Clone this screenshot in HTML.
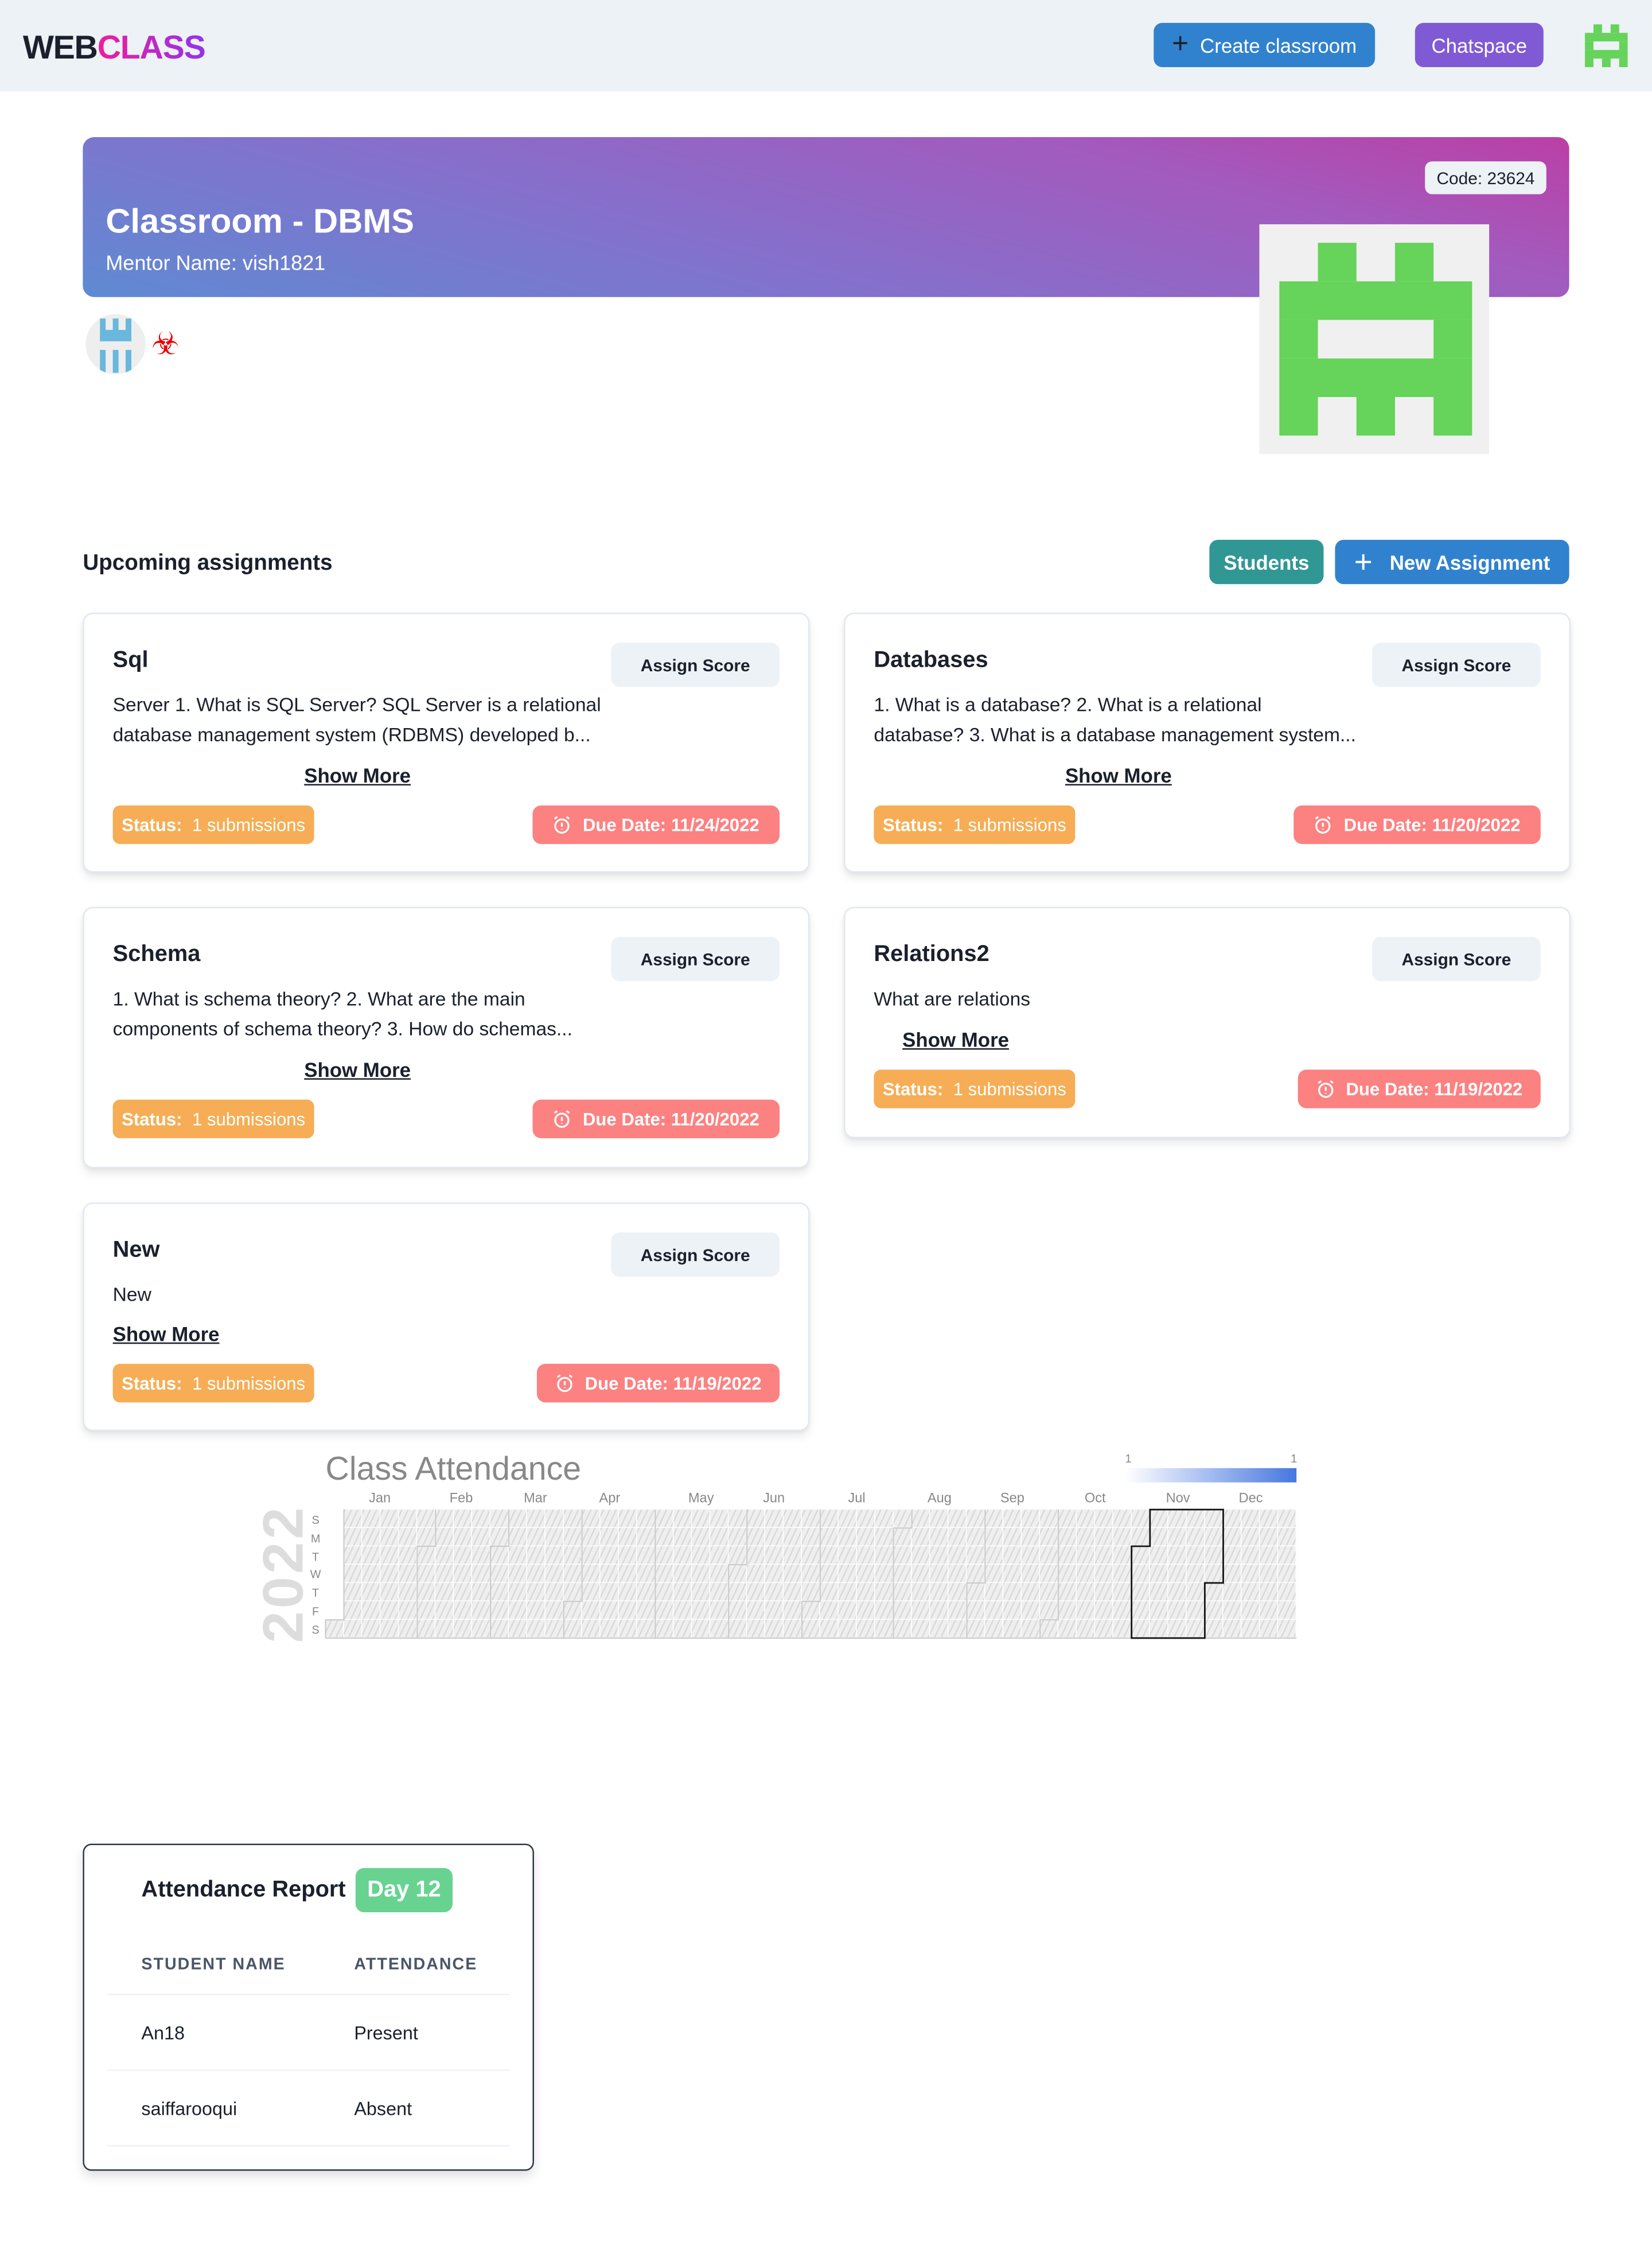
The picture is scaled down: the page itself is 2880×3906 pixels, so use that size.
<!DOCTYPE html>
<html><head><meta charset="utf-8">
<style>
html,body{margin:0;padding:0;background:#fff;}
body{width:2880px;height:3904px;overflow:hidden;position:relative;font-family:"Liberation Sans",sans-serif;color:#1a202c;}
#w{position:absolute;left:0;top:0;width:1157px;height:1569px;transform:scale(2.4892);transform-origin:0 0;}
.a{position:absolute;white-space:nowrap;}
.btn{position:absolute;border-radius:6px;color:#fff;font-weight:bold;font-size:14px;display:flex;align-items:center;justify-content:center;}
.card{position:absolute;border:1px solid #e2e8f0;border-radius:7px;box-shadow:0 4px 6px rgba(0,0,0,.08),0 1px 3px rgba(0,0,0,.06);background:#fff;}
.card .t{position:absolute;left:20px;font-size:16px;font-weight:bold;line-height:20px;}
.card .as{position:absolute;left:369px;top:20px;width:118px;height:31px;background:#edf2f7;border-radius:6px;font-size:12px;font-weight:bold;display:flex;align-items:center;justify-content:center;}
.card .d{position:absolute;left:20px;font-size:13.5px;line-height:21px;white-space:nowrap;}
.card .sm{position:absolute;font-size:14px;text-decoration:underline;font-weight:bold;white-space:nowrap;line-height:18px;}
.st{position:absolute;left:20px;width:141px;height:27px;background:#f6ad55;border-radius:5px;color:#fff;font-size:12.5px;display:flex;align-items:center;justify-content:center;}
.st b{margin-right:7px}
.due{position:absolute;right:20px;height:27px;background:#fc8181;border-radius:6px;color:#fff;font-size:12.5px;font-weight:bold;display:flex;align-items:center;justify-content:center;}
.due svg{margin-right:8px}
</style></head><body><div id="w">
<!-- navbar -->
<div class="a" style="left:0;top:0;width:1157px;height:64px;background:#edf2f7"></div>
<div class="a" style="left:16px;top:19px;font-size:23px;font-weight:900;letter-spacing:-0.5px;line-height:28px"><span style="color:#1a202c">WEB</span><span style="background:linear-gradient(90deg,#ed1e9b,#9333ea);-webkit-background-clip:text;color:transparent">CLASS</span></div>
<div class="btn" style="left:808px;top:16px;width:155px;height:31px;background:#3182ce;font-weight:normal;font-size:14px"><span style="font-size:20px;margin-right:8px;color:#1a202c;font-weight:300">+</span>Create classroom</div>
<div class="btn" style="left:991px;top:16px;width:90px;height:31px;background:#805ad5;font-weight:normal">Chatspace</div>
<svg class="a" style="left:1110px;top:17px" width="30" height="30" viewBox="0 0 5 5"><g fill="#66d35a"><rect x="1" y="0" width="1" height="1"/><rect x="3" y="0" width="1" height="1"/><rect x="0" y="1" width="5" height="1"/><rect x="0" y="2" width="1" height="1"/><rect x="4" y="2" width="1" height="1"/><rect x="0" y="3" width="5" height="1"/><rect x="0" y="4" width="1" height="1"/><rect x="2" y="4" width="1" height="1"/><rect x="4" y="4" width="1" height="1"/></g></svg>

<!-- banner -->
<div class="a" style="left:58px;top:96px;width:1041px;height:112px;border-radius:8px;background:linear-gradient(15deg,#5f8ad3 0%,#8570cc 40%,#a35abd 75%,#bb3fa6 100%)"></div>
<div class="a" style="left:74px;top:141px;font-size:24px;font-weight:bold;color:#fff;line-height:30px">Classroom - DBMS</div>
<div class="a" style="left:74px;top:176px;font-size:14.5px;color:#fff;line-height:18px;font-weight:300">Mentor Name: vish1821</div>
<div class="a" style="left:998px;top:113px;width:85px;height:23px;background:#edf2f7;border-radius:5px;font-size:12px;display:flex;align-items:center;justify-content:center">Code: 23624</div>
<svg class="a" style="left:882px;top:157px" width="161" height="161" viewBox="0 0 161 161"><rect width="161" height="161" fill="#f0f0f0"/><g fill="#66d35a" transform="translate(14,13) scale(27)"><rect x="1" y="0" width="1" height="1"/><rect x="3" y="0" width="1" height="1"/><rect x="0" y="1" width="5" height="1"/><rect x="0" y="2" width="1" height="1"/><rect x="4" y="2" width="1" height="1"/><rect x="0" y="3" width="5" height="1"/><rect x="0" y="4" width="1" height="1"/><rect x="2" y="4" width="1" height="1"/><rect x="4" y="4" width="1" height="1"/></g></svg>
<svg class="a" style="left:60px;top:220px" width="42" height="42" viewBox="0 0 42 42"><defs><clipPath id="c"><circle cx="21" cy="21" r="21"/></clipPath></defs><g clip-path="url(#c)"><rect width="42" height="42" fill="#eee"/><g fill="#6ab7dd"><rect x="10" y="3" width="4" height="8"/><rect x="19" y="3" width="4" height="8"/><rect x="28" y="3" width="4" height="8"/><rect x="10" y="11" width="22" height="8"/><rect x="10" y="25" width="4" height="16"/><rect x="19" y="25" width="4" height="16"/><rect x="28" y="25" width="4" height="16"/></g></g></svg>
<div class="a" style="left:106px;top:229px;font-size:22px;color:#e00;line-height:24px">☣</div>

<!-- upcoming -->
<div class="a" style="left:58px;top:385px;font-size:15.5px;font-weight:bold;line-height:20px">Upcoming assignments</div>
<div class="btn" style="left:847px;top:378px;width:80px;height:31px;background:#319795">Students</div>
<div class="btn" style="left:935px;top:378px;width:164px;height:31px;background:#3182ce"><span style="font-size:22px;font-weight:300;margin-right:12px">+</span>New Assignment</div>

<!-- card1 -->
<div class="card" style="left:58px;top:429px;width:507px;height:180px">
 <div class="t" style="top:23px">Sql</div><div class="as">Assign Score</div>
 <div class="d" style="top:53px">Server 1. What is SQL Server? SQL Server is a relational<br>database management system (RDBMS) developed b...</div>
 <div class="sm" style="left:154px;top:104px">Show More</div>
 <div class="st" style="top:134px"><b>Status:</b> 1 submissions</div>
 <div class="due" style="top:134px;width:173px"><svg width="13" height="13" viewBox="0 0 14 14" fill="none" stroke="#fff" stroke-width="1.4"><circle cx="7" cy="8" r="5"/><path d="M7 5.5v3M7 10v.6M1.5 2.5l2-1.5M12.5 2.5l-2-1.5"/></svg>Due Date: 11/24/2022</div>
</div>
<!-- card2 -->
<div class="card" style="left:591px;top:429px;width:507px;height:180px">
 <div class="t" style="top:23px">Databases</div><div class="as">Assign Score</div>
 <div class="d" style="top:53px">1. What is a database? 2. What is a relational<br>database? 3. What is a database management system...</div>
 <div class="sm" style="left:154px;top:104px">Show More</div>
 <div class="st" style="top:134px"><b>Status:</b> 1 submissions</div>
 <div class="due" style="top:134px;width:173px"><svg width="13" height="13" viewBox="0 0 14 14" fill="none" stroke="#fff" stroke-width="1.4"><circle cx="7" cy="8" r="5"/><path d="M7 5.5v3M7 10v.6M1.5 2.5l2-1.5M12.5 2.5l-2-1.5"/></svg>Due Date: 11/20/2022</div>
</div>
<!-- card3 -->
<div class="card" style="left:58px;top:635px;width:507px;height:181px">
 <div class="t" style="top:23px">Schema</div><div class="as">Assign Score</div>
 <div class="d" style="top:53px">1. What is schema theory? 2. What are the main<br>components of schema theory? 3. How do schemas...</div>
 <div class="sm" style="left:154px;top:104px">Show More</div>
 <div class="st" style="top:134px"><b>Status:</b> 1 submissions</div>
 <div class="due" style="top:134px;width:173px"><svg width="13" height="13" viewBox="0 0 14 14" fill="none" stroke="#fff" stroke-width="1.4"><circle cx="7" cy="8" r="5"/><path d="M7 5.5v3M7 10v.6M1.5 2.5l2-1.5M12.5 2.5l-2-1.5"/></svg>Due Date: 11/20/2022</div>
</div>
<!-- card4 -->
<div class="card" style="left:591px;top:635px;width:507px;height:160px">
 <div class="t" style="top:23px">Relations2</div><div class="as">Assign Score</div>
 <div class="d" style="top:53px">What are relations</div>
 <div class="sm" style="left:40px;top:83px">Show More</div>
 <div class="st" style="top:113px"><b>Status:</b> 1 submissions</div>
 <div class="due" style="top:113px;width:170px"><svg width="13" height="13" viewBox="0 0 14 14" fill="none" stroke="#fff" stroke-width="1.4"><circle cx="7" cy="8" r="5"/><path d="M7 5.5v3M7 10v.6M1.5 2.5l2-1.5M12.5 2.5l-2-1.5"/></svg>Due Date: 11/19/2022</div>
</div>
<!-- card5 -->
<div class="card" style="left:58px;top:842px;width:507px;height:158px">
 <div class="t" style="top:23px">New</div><div class="as">Assign Score</div>
 <div class="d" style="top:53px">New</div>
 <div class="sm" style="left:20px;top:82px">Show More</div>
 <div class="st" style="top:112px"><b>Status:</b> 1 submissions</div>
 <div class="due" style="top:112px;width:170px"><svg width="13" height="13" viewBox="0 0 14 14" fill="none" stroke="#fff" stroke-width="1.4"><circle cx="7" cy="8" r="5"/><path d="M7 5.5v3M7 10v.6M1.5 2.5l2-1.5M12.5 2.5l-2-1.5"/></svg>Due Date: 11/19/2022</div>
</div>

<!-- heatmap -->
<svg class="a" style="left:170px;top:1010px" width="750" height="145" viewBox="170 1010 750 145" font-family="Liberation Sans, sans-serif">
 <defs>
  <pattern id="h" patternUnits="userSpaceOnUse" width="4" height="4" patternTransform="rotate(25)"><rect width="4" height="4" fill="#efefef"/><rect width="1" height="4" fill="#d9d9d9"/></pattern>
  <pattern id="g" patternUnits="userSpaceOnUse" x="228" y="1057" width="12.83" height="12.857"><path d="M12.83 0V12.857M0 12.857H12.83" stroke="#fff" stroke-width="1.2" fill="none"/></pattern>
  <linearGradient id="lg"><stop offset="0" stop-color="#fff"/><stop offset="1" stop-color="#4677e0"/></linearGradient>
 </defs>
 <text x="228" y="1036" font-size="23" fill="#888">Class Attendance</text>
 <text x="788" y="1024" font-size="8" fill="#888">1</text><text x="904" y="1024" font-size="8" fill="#888">1</text>
 <rect x="788" y="1028" width="120" height="10" fill="url(#lg)"/>
 <g font-size="9.5" fill="#888" text-anchor="middle">
  <text x="266" y="1052">Jan</text><text x="323" y="1052">Feb</text><text x="375" y="1052">Mar</text><text x="427" y="1052">Apr</text><text x="491" y="1052">May</text><text x="542" y="1052">Jun</text><text x="600" y="1052">Jul</text><text x="658" y="1052">Aug</text><text x="709" y="1052">Sep</text><text x="767" y="1052">Oct</text><text x="825" y="1052">Nov</text><text x="876" y="1052">Dec</text>
 </g>
 <g font-size="8" fill="#888" text-anchor="middle">
  <text x="221" y="1067">S</text><text x="221" y="1080">M</text><text x="221" y="1093">T</text><text x="221" y="1105">W</text><text x="221" y="1118">T</text><text x="221" y="1131">F</text><text x="221" y="1144">S</text>
 </g>
 <text transform="translate(212,1102) rotate(-90)" font-size="40" fill="#ddd" text-anchor="middle" font-weight="bold" letter-spacing="2">2022</text>
 <g transform="translate(228,1057)">
  <rect width="680" height="90" fill="url(#h)"/>
  <rect x="0" y="0" width="12.83" height="77.1" fill="#fff"/>
 </g>
 <rect x="228" y="1057" width="680" height="90" fill="url(#g)"/>
 <g transform="translate(228,1057)" fill="none" stroke="#c8c8c8" stroke-width="0.8">
  <path d="M0 90V77.2H12.83V0"/>
  <path d="M64.2 90V25.7H77V0"/>
  <path d="M115.5 90V25.7H128.3V0"/>
  <path d="M166.8 90V64.3H179.6V0"/>
  <path d="M230.9 90V0"/>
  <path d="M282.3 90V38.6H295.1V0"/>
  <path d="M333.6 90V64.3H346.4V0"/>
  <path d="M397.7 90V12.9H410.6V0"/>
  <path d="M449.1 90V51.4H461.9V0"/>
  <path d="M500.4 90V77.2H513.2V0"/>
  <path d="M0 90H680"/>
  <path d="M564.5 90V25.7H577.4V0H628.7V51.4H615.8V90Z" stroke="#111" stroke-width="1.1"/>
 </g>
</svg>

<!-- attendance report -->
<div class="a" style="left:58px;top:1291px;width:314px;height:227px;border:1px solid #2d3748;border-radius:6px;box-shadow:0 4px 8px rgba(0,0,0,.12)"></div>
<div class="a" style="left:99px;top:1314px;font-size:16px;font-weight:bold;line-height:20px">Attendance Report</div>
<div class="a" style="left:249px;top:1308px;width:68px;height:31px;background:#68d391;border-radius:6px;color:#fff;font-weight:bold;font-size:16px;display:flex;align-items:center;justify-content:center">Day 12</div>
<div class="a" style="left:99px;top:1370px;font-size:11.5px;font-weight:bold;letter-spacing:0.8px;color:#4a5568">STUDENT NAME</div>
<div class="a" style="left:248px;top:1370px;font-size:11.5px;font-weight:bold;letter-spacing:0.8px;color:#4a5568">ATTENDANCE</div>
<div class="a" style="left:75px;top:1396px;width:282px;height:1px;background:#edf2f7"></div>
<div class="a" style="left:99px;top:1416px;font-size:13px">An18</div>
<div class="a" style="left:248px;top:1416px;font-size:13px">Present</div>
<div class="a" style="left:75px;top:1449px;width:282px;height:1px;background:#edf2f7"></div>
<div class="a" style="left:99px;top:1469px;font-size:13px">saiffarooqui</div>
<div class="a" style="left:248px;top:1469px;font-size:13px">Absent</div>
<div class="a" style="left:75px;top:1502px;width:282px;height:1px;background:#edf2f7"></div>
</div></body></html>
